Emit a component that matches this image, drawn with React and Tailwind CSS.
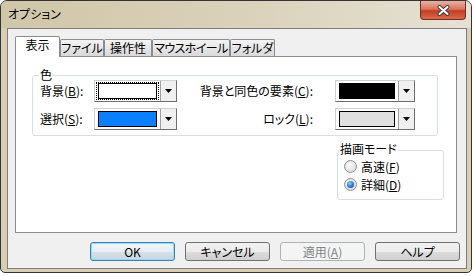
import React from 'react'

const tabs = [
  { label: '表示', w: 'w-[45px]', active: true },
  { label: 'ファイル', w: 'w-[44px]' },
  { label: '操作性', w: 'w-[48px]' },
  { label: 'マウスホイール', w: 'w-[78px]', tight: true },
  { label: 'フォルダ', w: 'w-[45px]' },
]

function Combo({ swatch, focused, width = 'w-[83px]' }) {
  return (
    <div className={`flex h-[22px] ${width} border border-t-[#d0d0d0] border-l-[#d0d0d0] border-b-[#6f6f6f] border-r-[#6f6f6f] bg-[#f0f0f0]`}>
      <div className="flex flex-1 items-center bg-white p-[1px]">
        <div
          className={`flex h-full w-full items-center px-[1px] border border-dotted ${
            focused ? 'border-black' : 'border-transparent'
          }`}
        >
          <div className={`h-[16px] w-full border border-black ${swatch}`} />
        </div>
      </div>
      <div className="flex w-[16px] items-center justify-center border-l border-[#a0a0a0] bg-[#f0f0f0]">
        <svg width="7" height="4" viewBox="0 0 7 4">
          <path d="M0 0h7L3.5 4z" fill="#000" />
        </svg>
      </div>
    </div>
  )
}

function Radio({ checked, children }) {
  return (
    <div className="flex h-[13px] items-center gap-[4px]">
      <div className="flex h-[13px] w-[13px] items-center justify-center rounded-full border border-[#8e8f8f] bg-[radial-gradient(circle_at_45%_40%,#ffffff,#d0d0d0)]">
        {checked && (
          <div className="h-[7px] w-[7px] rounded-full bg-[radial-gradient(circle_at_40%_35%,#8fd3ff,#1d6fd0_60%,#0b3f8a)]" />
        )}
      </div>
      <span className="leading-[14px]">{children}</span>
    </div>
  )
}

function Button({ children, kind }) {
  const styles = {
    default:
      'border-[#3c7fb1] shadow-[inset_0_0_0_1px_#8fdcfb] bg-[linear-gradient(#f1f6f9,#e6eef3_50%,#d6e1e8_50%,#c9d6df)]',
    normal:
      'border-[#707070] bg-[linear-gradient(#f2f2f2,#ebebeb_50%,#dddddd_50%,#cfcfcf)]',
    disabled: 'border-[#adb2b5] bg-[#f4f4f4] text-[#838383]',
  }
  return (
    <div
      className={`flex h-[19px] w-[85px] items-center justify-center rounded-[3px] border leading-[14px] ${styles[kind]}`}
    >
      {children}
    </div>
  )
}

export default function App() {
  return (
    <div className="h-[276px] w-[474px] bg-white font-['Noto_Sans_CJK_JP',sans-serif] text-[12px] text-black [font-feature-settings:'palt']">
      {/* Window */}
      <div className="flex h-[273px] w-[472px] flex-col overflow-hidden rounded-t-[7px] rounded-b-[5px] border border-[#343434] bg-[#d7ceb3]">
        {/* Title bar */}
        <div className="flex h-[27px] items-start justify-between bg-gradient-to-r from-[#d0c6a8] via-[#d9d1b9] to-[#e6e1d4] pl-[7px] pr-[5px]">
          <span className="mt-[5px] text-[12px] leading-[16px]">オプション</span>
          <div className="flex h-[19px] w-[46px] items-center justify-center rounded-b-[4px] border border-t-0 border-[#6e2f25] bg-[linear-gradient(#eab1a3,#d97560_45%,#c53d22_55%,#d9694e)]">
            <svg width="13" height="11" viewBox="0 0 13 11">
              <path d="M2.5 2L10.5 9M10.5 2L2.5 9" stroke="#3d3d3d" strokeWidth="4" strokeLinecap="round" />
              <path d="M2.5 2L10.5 9M10.5 2L2.5 9" stroke="#ffffff" strokeWidth="2" strokeLinecap="round" />
            </svg>
          </div>
        </div>

        {/* Frame + client */}
        <div className="flex flex-1 pl-[6px] pr-[4px] pb-[3px]">
          <div className="flex flex-1 flex-col border border-[#7d7d7d] bg-[#f0f0f0] pl-[7px] pr-[6px] pt-[7px] pb-[7px]">
            {/* Tabs */}
            <div className="flex h-[20px] items-end">
              {tabs.map((t) =>
                t.active ? (
                  <div
                    key={t.label}
                    className={`relative z-10 -mb-px flex h-[21px] ${t.w} justify-center whitespace-nowrap rounded-t-[2px] border border-b-0 border-[#898c95] bg-white pt-[1px] leading-[14px]`}
                  >
                    {t.label}
                  </div>
                ) : (
                  <div
                    key={t.label}
                    className={`flex h-[17px] ${t.w} justify-center whitespace-nowrap rounded-t-[2px] border border-b-0 border-[#898c95] bg-gradient-to-b from-[#f4f4f4] to-[#d9d9d9] pt-[1px] leading-[14px] ${
                      t.tight ? 'tracking-[-0.6px]' : ''
                    }`}
                  >
                    {t.label}
                  </div>
                )
              )}
            </div>

            {/* Panel */}
            <div className="mr-[3px] flex h-[177px] flex-col border border-[#898c95] bg-white">
              {/* 色 group */}
              <div className="relative ml-[16px] mt-[18px] h-[61px] w-[406px] rounded-[3px] border border-[#d5dfe5] pl-[7px] pr-[22px] pt-[4px]">
                <span className="absolute -top-[8px] left-[6px] bg-white px-[1px] leading-[14px]">色</span>
                <div className="grid grid-cols-[54px_83px_1fr_80px] items-center gap-y-[6px]">
                  <span className="leading-[14px]">
                    背景(<span className="underline">B</span>):
                  </span>
                  <Combo swatch="bg-white" focused />
                  <span className="pr-[22px] text-right leading-[14px]">
                    背景と同色の要素(<span className="underline">C</span>):
                  </span>
                  <Combo swatch="bg-black" width="w-[80px]" />

                  <span className="leading-[14px]">
                    選択(<span className="underline">S</span>):
                  </span>
                  <Combo swatch="bg-[#0a80ff]" />
                  <span className="pr-[22px] text-right leading-[14px]">
                    ロック(<span className="underline">L</span>):
                  </span>
                  <Combo swatch="bg-[#e0e0e0]" width="w-[80px]" />
                </div>
              </div>

              {/* 描画モード group */}
              <div className="mt-[14px] flex justify-end pr-[12px]">
                <div className="relative flex h-[50px] w-[107px] flex-col gap-[5px] rounded-[3px] border border-[#d5dfe5] pl-[6px] pt-[9px]">
                  <span className="absolute -top-[9px] left-[1px] bg-white px-[1px] leading-[14px]">描画モード</span>
                  <Radio>
                    高速(<span className="underline">F</span>)
                  </Radio>
                  <Radio checked>
                    詳細(<span className="underline">D</span>)
                  </Radio>
                </div>
              </div>
            </div>

            {/* Buttons */}
            <div className="mt-[9px] flex justify-end gap-[10px]">
              <Button kind="default">OK</Button>
              <Button kind="normal">キャンセル</Button>
              <Button kind="disabled">
                適用(<span className="underline">A</span>)
              </Button>
              <Button kind="normal">ヘルプ</Button>
            </div>
          </div>
        </div>
      </div>
    </div>
  )
}
